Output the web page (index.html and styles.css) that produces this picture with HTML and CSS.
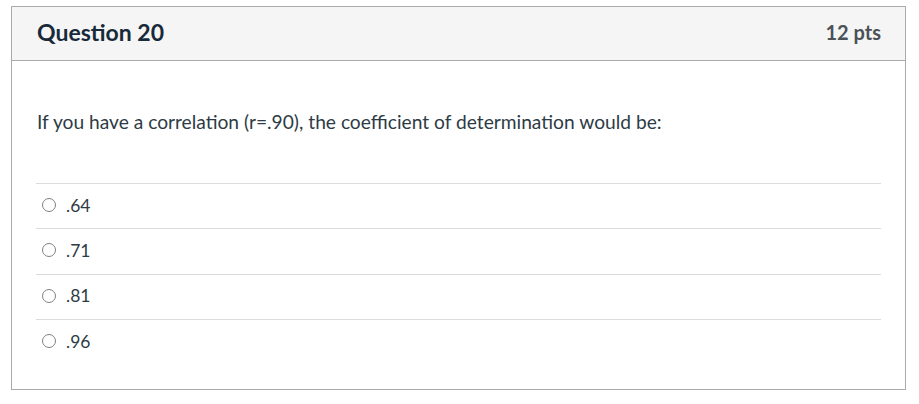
FILE: index.html
```html
<!DOCTYPE html>
<html>
<head>
<meta charset="utf-8">
<link rel="stylesheet" href="styles.css">
</head>
<body>
<div class="question">
  <div class="header">
    <h2 class="title">Question 20</h2>
    <span class="pts">12 pts</span>
  </div>
  <div class="content">
    <p class="text">If you have a correlation (r=.90), the coefficient of determination would be:</p>
    <ul class="answers">
      <li class="answer"><span class="radio"></span><span class="label">.64</span></li>
      <li class="answer"><span class="radio"></span><span class="label">.71</span></li>
      <li class="answer"><span class="radio"></span><span class="label">.81</span></li>
      <li class="answer"><span class="radio"></span><span class="label">.96</span></li>
    </ul>
  </div>
</div>
</body>
</html>
```

FILE: styles.css
```css
html, body {
  margin: 0;
  padding: 0;
  background: #fff;
}
body {
  padding: 6px 0 0 11px;
  font-family: Lato, "Liberation Sans", sans-serif;
  color: #2d3b45;
}
.question {
  width: 893px;
  height: 382px;
  border: 1px solid #aaaaaa;
  display: flex;
  flex-direction: column;
}
.header {
  height: 54px;
  box-sizing: border-box;
  background: #f5f5f5;
  border-bottom: 1px solid #aaaaaa;
  display: flex;
  align-items: center;
  justify-content: space-between;
  padding: 0 24px 4px 25px;
}
.title {
  margin: 0;
  font-size: 23px;
  font-weight: 700;
  color: #182a3a;
}
.pts {
  font-size: 20px;
  font-weight: 700;
  color: #4a5157;
}
.content {
  padding: 0 24px 0 25px;
}
.text {
  margin: 49px 0 0 0;
  font-size: 19.2px;
  line-height: 24px;
  color: #2d3b45;
}
.answers {
  list-style: none;
  margin: 49px 0 0 -1px;
  padding: 0;
}
.answer {
  border-top: 1px solid #dcdcdc;
  height: 45px;
  box-sizing: border-box;
  display: flex;
  align-items: center;
  padding: 0 0 2px 6px;
}
.answer + .answer {
  height: 45.5px;
}
.radio {
  width: 14px;
  height: 14px;
  box-sizing: border-box;
  border: 1px solid #808080;
  border-radius: 50%;
  margin-right: 10px;
}
.label {
  font-size: 17.5px;
  color: #2d3b45;
}
```
